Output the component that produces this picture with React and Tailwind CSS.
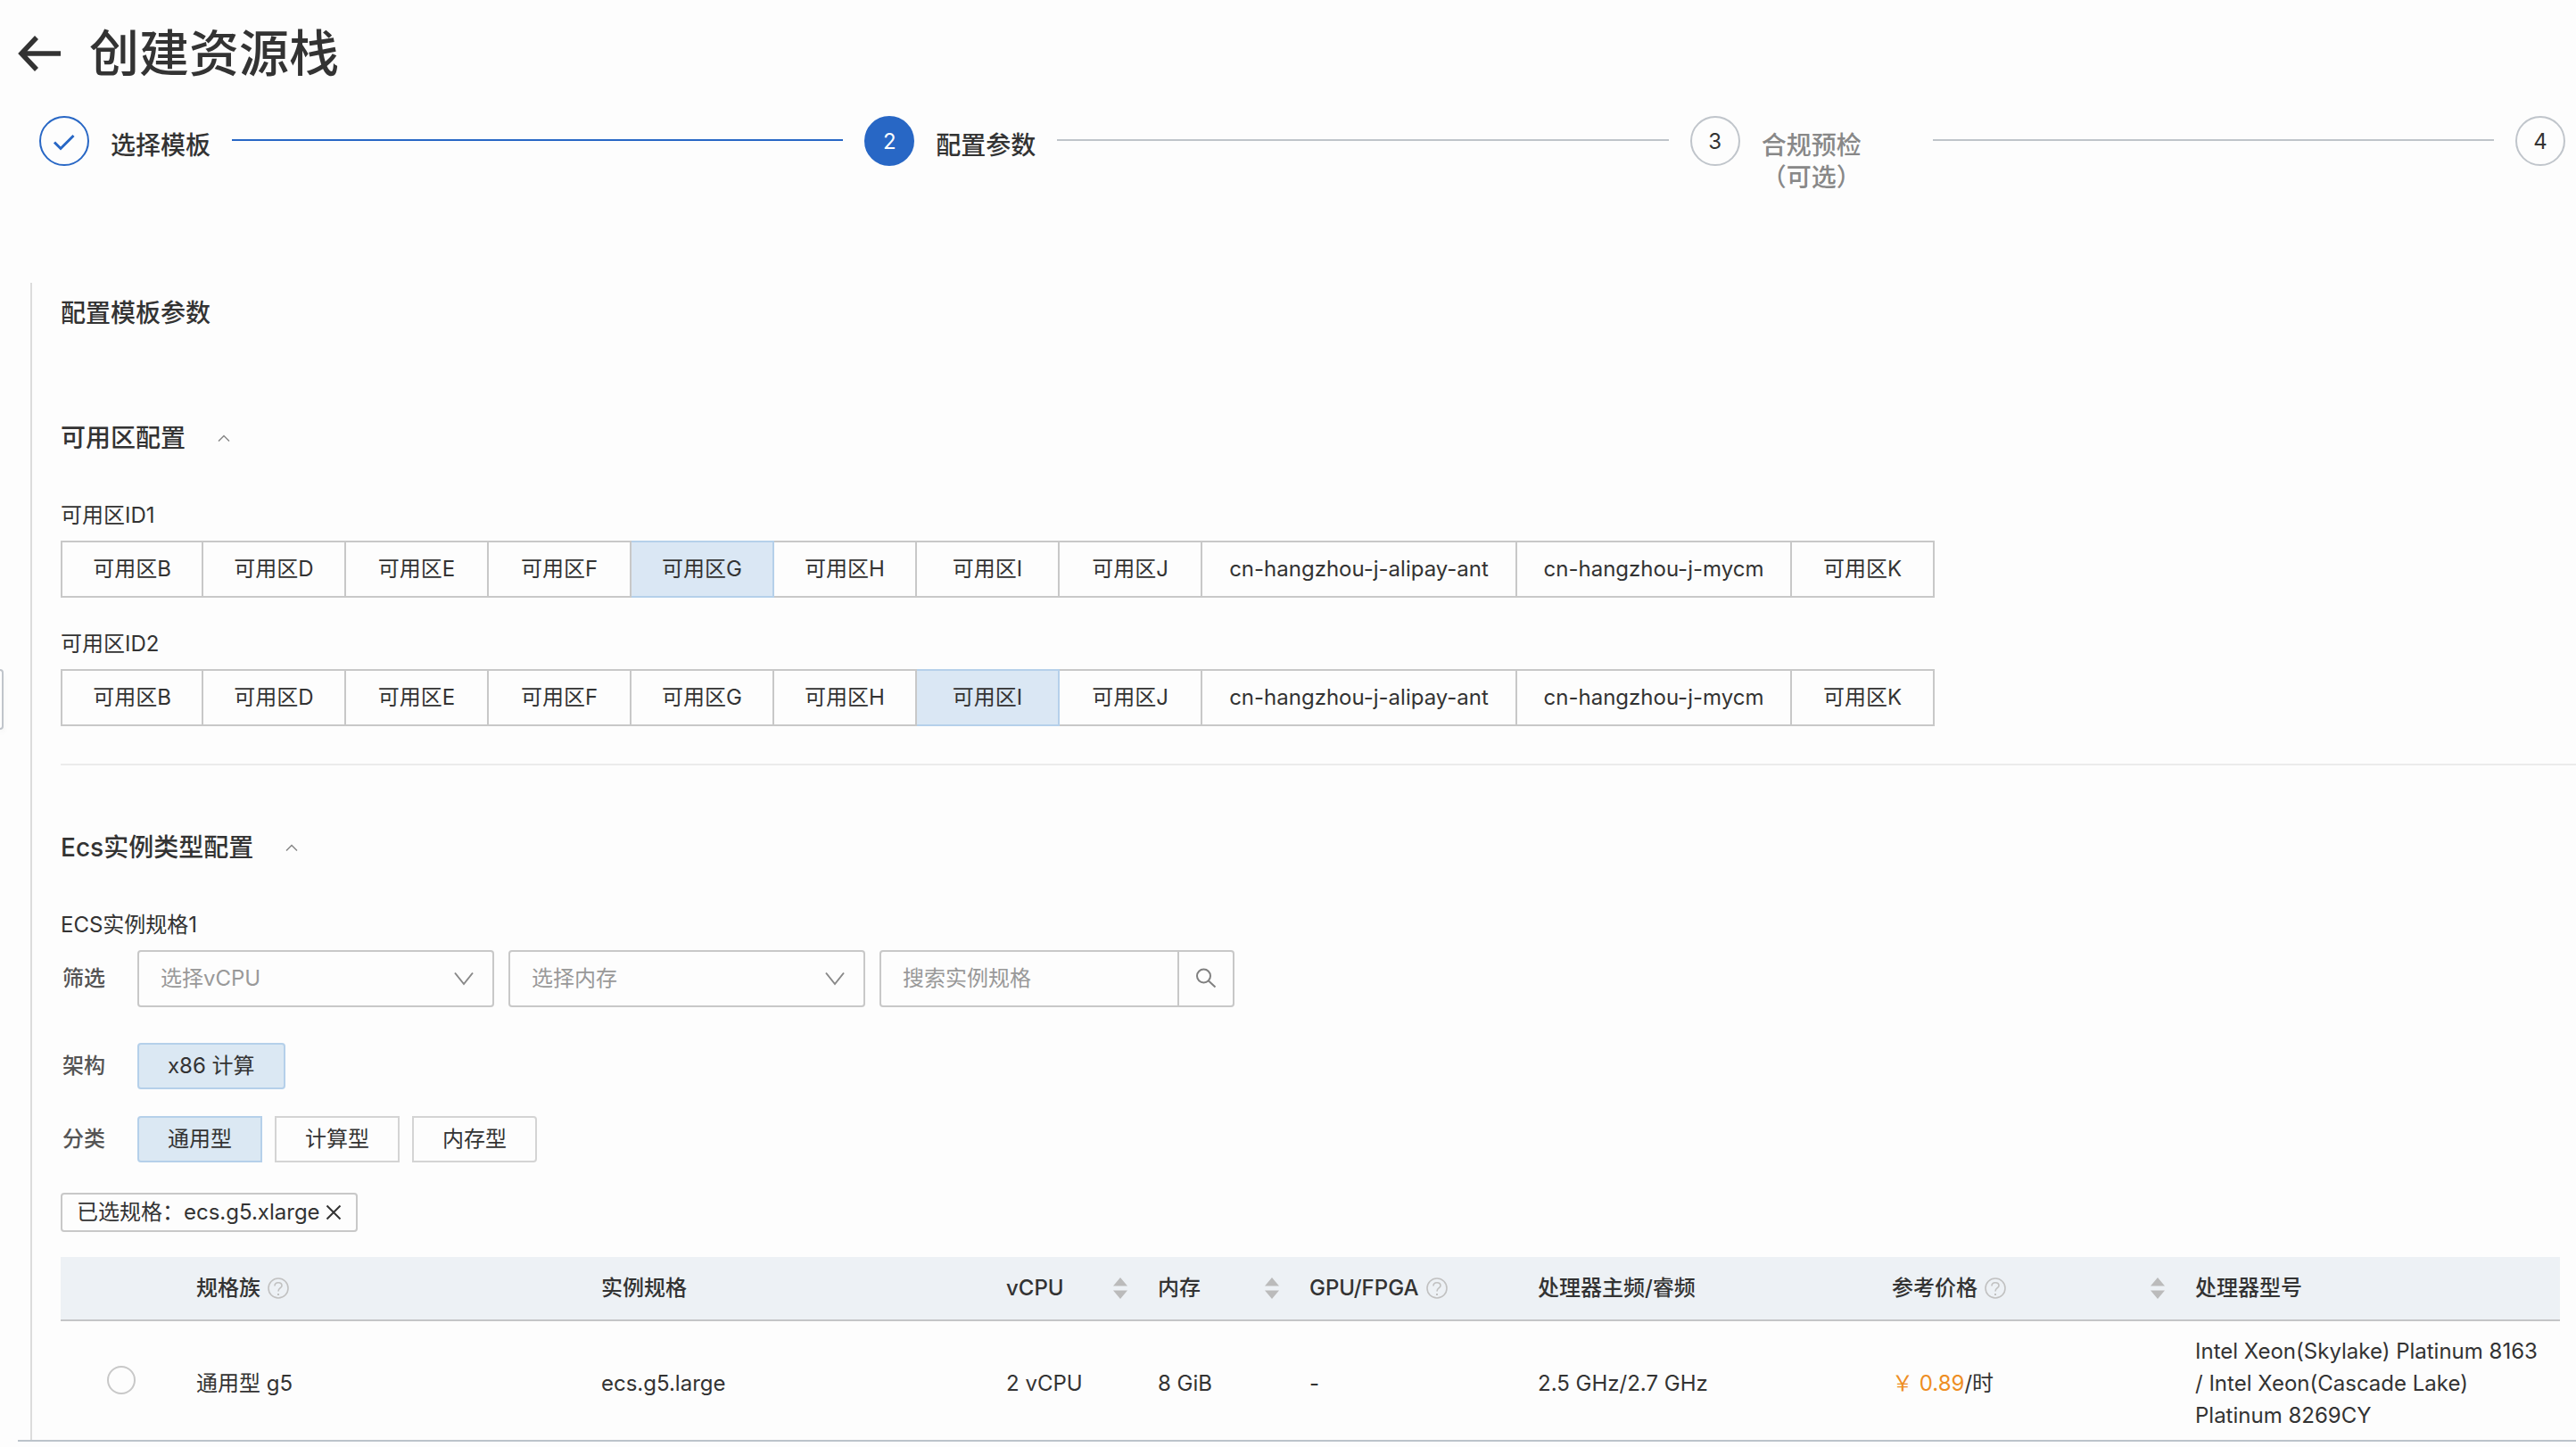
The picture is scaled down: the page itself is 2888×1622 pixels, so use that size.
import React, { useState } from 'react';

const zones = [
  { name: '可用区B' },
  { name: '可用区D' },
  { name: '可用区E' },
  { name: '可用区F' },
  { name: '可用区G' },
  { name: '可用区H' },
  { name: '可用区I' },
  { name: '可用区J' },
  { name: 'cn-hangzhou-j-alipay-ant', width: 'w-[353px]' },
  { name: 'cn-hangzhou-j-mycm', width: 'w-[308px]' },
  { name: '可用区K' },
];

const columns = [
  { title: '', width: 'w-[120px]' },
  { title: '规格族', width: 'w-[454px]', help: true },
  { title: '实例规格', width: 'w-[454px]' },
  { title: 'vCPU', width: 'w-[170px]', sort: true },
  { title: '内存', width: 'w-[170px]', sort: true },
  { title: 'GPU/FPGA', width: 'w-[256px]', help: true },
  { title: '处理器主频/睿频', width: 'w-[397px]' },
  { title: '参考价格', width: 'w-[340px]', help: true, sort: true },
  { title: '处理器型号', width: 'w-[441px]' },
];

const specs = [
  {
    family: '通用型 g5',
    type: 'ecs.g5.large',
    cpu: '2 vCPU',
    memory: '8 GiB',
    gpu: '-',
    clock: '2.5 GHz/2.7 GHz',
    price: '0.89',
    model: 'Intel Xeon(Skylake) Platinum 8163 / Intel Xeon(Cascade Lake) Platinum 8269CY',
  },
];

const ChevronUp = () => (
  <svg width="14" height="8" viewBox="0 0 14 8" fill="none" stroke="#888" strokeWidth="1.5">
    <path d="M1 7.5 7 1.5l6 6" />
  </svg>
);

const HelpIcon = () => (
  <svg width="24" height="24" viewBox="0 0 24 24" fill="none" stroke="#c1c1c1" strokeWidth="1.6">
    <circle cx="12" cy="12" r="11" />
    <path d="M8 9.500C8 7.200 9.700 5.800 12 5.800s4 1.400 4 3.400c0 2.600-4 2.600-4 6.300" />
    <path d="M12 18v2" strokeWidth="2" />
  </svg>
);

const SortIcon = () => (
  <svg width="16" height="26" viewBox="0 0 16 26" fill="#bbb">
    <path d="M8 1 16 10.500H0zM0 15.500h16L8 25z" />
  </svg>
);

const Section = ({ title, children }) => {
  const [isOpen, setIsOpen] = useState(true);

  return (
    <section>
      <h3>
        <button
          type="button"
          aria-expanded={isOpen}
          onClick={() => setIsOpen(!isOpen)}
          className="flex items-center text-[28px] leading-10 font-medium"
        >
          {title}
          <span className={isOpen ? 'ml-9' : 'ml-9 rotate-180'}>
            <ChevronUp />
          </span>
        </button>
      </h3>
      {isOpen && children}
    </section>
  );
};

const ZonePicker = ({ label, initial }) => {
  const [value, setValue] = useState(initial);

  return (
    <div role="group" aria-label={label} className="mb-8">
      <div className="mb-2 leading-10">{label}</div>
      <div className="flex">
        {zones.map((zone) => (
          <button
            key={zone.name}
            type="button"
            aria-pressed={value === zone.name}
            onClick={() => setValue(zone.name)}
            className={`h-16 border-2 border-l-0 first:border-l-2 ${zone.width || 'w-40'} ${
              value === zone.name ? 'border-[#b5d0ea] bg-[#dae7f4]' : 'border-[#c8c8c8]'
            }`}
          >
            {zone.name}
          </button>
        ))}
      </div>
    </div>
  );
};

const FilterSelect = ({ label }) => (
  <div className="relative w-[400px]">
    <select
      aria-label={label}
      className="h-16 w-full appearance-none rounded-sm border-2 border-[#c8c8c8] bg-transparent px-6 text-[#999]"
    >
      <option>{label}</option>
    </select>
    <svg
      className="pointer-events-none absolute top-6 right-[22px]"
      width="24"
      height="16"
      viewBox="0 0 24 16"
      fill="none"
      stroke="#888"
      strokeWidth="2"
    >
      <path d="M2 1.500 12 14 22 1.500" />
    </svg>
  </div>
);

const FilterRow = ({ label, children }) => (
  <div className="flex items-center">
    <div className="w-[86px] pl-0.5 font-medium text-[#555]">{label}</div>
    {children}
  </div>
);

const Option = ({ active, className = '', children }) => (
  <button
    type="button"
    aria-pressed={active}
    className={`h-[52px] border-2 px-8 ${className} ${
      active ? 'border-[#b5d0ea] bg-[#dbe8f3]' : 'border-[#d4d4d4]'
    }`}
  >
    {children}
  </button>
);

const Circle = ({ className, children }) => (
  <span className={`flex size-14 shrink-0 items-center justify-center rounded-full border-2 pt-0.5 ${className}`}>
    {children}
  </span>
);

const Steps = () => (
  <ol className="flex items-start pt-2.5 pr-3 pl-11 font-medium">
    <li className="flex flex-1 items-start">
      <Circle className="border-[#2867c5]">
        <svg width="26" height="20" viewBox="0 0 26 20" fill="none" stroke="#2867c5" strokeWidth="3">
          <path d="m2 10.500 7 7L23.500 3" />
        </svg>
      </Circle>
      <span className="ml-6 pt-[15px] text-[28px] leading-9">选择模板</span>
      <span className="mt-[26px] mr-6 ml-6 h-0.5 flex-1 bg-[#2867c5]" />
    </li>
    <li className="flex flex-1 items-start" aria-current="step">
      <Circle className="border-[#2867c5] bg-[#2867c5] font-normal text-white">2</Circle>
      <span className="ml-6 pt-[15px] text-[28px] leading-9">配置参数</span>
      <span className="mt-[26px] mr-6 ml-6 h-0.5 flex-1 bg-[#bfc4ca]" />
    </li>
    <li className="flex flex-1 items-start">
      <Circle className="border-[#c0c5cb] font-normal">3</Circle>
      <span className="ml-6 w-[168px] pt-[15px] text-[28px] leading-9 text-[#888]">
        合规预检
        <br />
        （可选）
      </span>
      <span className="mt-[26px] mr-6 ml-6 h-0.5 flex-1 bg-[#bfc4ca]" />
    </li>
    <li>
      <Circle className="border-[#c0c5cb] font-normal">4</Circle>
    </li>
  </ol>
);

const SpecTable = () => (
  <table className="w-full table-fixed text-left leading-9">
    <thead>
      <tr className="h-[71px] border-b-2 border-[#c4c5c7] bg-[#edf1f5]">
        {columns.map((col) => (
          <th key={col.title} className={`${col.width} pl-8 font-medium`}>
            <div className="flex items-center gap-2 pr-0.5">
              {col.title}
              {col.help && <HelpIcon />}
              {col.sort && (
                <button type="button" aria-label={`${col.title} 排序`} className="ml-auto">
                  <SortIcon />
                </button>
              )}
            </div>
          </th>
        ))}
      </tr>
    </thead>
    <tbody>
      {specs.map((spec) => (
        <tr key={spec.type}>
          <td className="pb-2 pl-[52px]">
            <input
              type="radio"
              name="spec"
              aria-label={spec.type}
              className="block size-8 appearance-none rounded-full border-2 border-[#c8c8c8] checked:border-8 checked:border-[#2867c5]"
            />
          </td>
          <td className="pl-8">{spec.family}</td>
          <td className="pl-8">{spec.type}</td>
          <td className="pl-8">{spec.cpu}</td>
          <td className="pl-8">{spec.memory}</td>
          <td className="pl-8">{spec.gpu}</td>
          <td className="pl-8">{spec.clock}</td>
          <td className="pl-8">
            <span className="text-[#ee8e24]">￥ {spec.price}</span>/时
          </td>
          <td className="py-4 pr-3 pl-8">{spec.model}</td>
        </tr>
      ))}
    </tbody>
  </table>
);

const App = () => {
  return (
    <div className="relative flex h-screen flex-col overflow-hidden bg-[#fdfdfd] font-['Inter','Noto_Sans_CJK_SC',sans-serif] text-2xl text-[#333]">
      <header className="flex h-[120px] items-center gap-[30px] pl-5">
        <a href="#" aria-label="返回">
          <svg width="50" height="42" viewBox="0 0 50 42" fill="none" stroke="#333" strokeWidth="5.500">
            <path d="M48 21H4M21 3 4 21l17 18" />
          </svg>
        </a>
        <h1 className="text-[56px] leading-[72px] font-medium">创建资源栈</h1>
      </header>

      <Steps />

      {/* Template parameters */}
      <main className="mt-[100px] ml-[34px] min-h-0 flex-1 overflow-hidden border-l-2 border-[#dcdcdc] pl-8">
        <h2 className="mt-3.5 mb-[100px] text-[28px] leading-10 font-medium">配置模板参数</h2>

        <Section title="可用区配置">
          <div className="mt-[47px] border-b-2 border-[#ebebeb] pb-2.5">
            <ZonePicker label="可用区ID1" initial="可用区G" />
            <ZonePicker label="可用区ID2" initial="可用区I" />
          </div>
        </Section>

        <div className="mt-[72px] pr-[18px]">
          <Section title="Ecs实例类型配置">
            <div className="mt-[47px] mb-2 leading-10">ECS实例规格1</div>
            <FilterRow label="筛选">
              <div className="flex gap-4">
                <FilterSelect label="选择vCPU" />
                <FilterSelect label="选择内存" />
                <div className="flex h-16 w-[398px] rounded-sm border-2 border-[#c8c8c8]">
                  <input
                    type="text"
                    aria-label="搜索实例规格"
                    placeholder="搜索实例规格"
                    className="min-w-0 flex-1 pl-6 placeholder:text-[#999]"
                  />
                  <button
                    type="button"
                    aria-label="搜索"
                    className="flex w-[62px] items-center justify-center border-l-2 border-[#c8c8c8]"
                  >
                    <svg width="24" height="24" viewBox="0 0 24 24" fill="none" stroke="#808080" strokeWidth="2">
                      <circle cx="9.500" cy="9" r="7.500" />
                      <path d="m15 14.500 7.500 7" />
                    </svg>
                  </button>
                </div>
              </div>
            </FilterRow>
            <div className="mt-10">
              <FilterRow label="架构">
                <Option active className="rounded-sm">
                  x86 计算
                </Option>
              </FilterRow>
            </div>
            <div className="mt-[30px]">
              <FilterRow label="分类">
                <div className="flex gap-3.5">
                  <Option active className="rounded-l-sm">
                    通用型
                  </Option>
                  <Option>计算型</Option>
                  <Option className="rounded-r-sm">内存型</Option>
                </div>
              </FilterRow>
            </div>

            {/* Current selection */}
            <div className="mt-[34px] mb-7 flex h-11 w-fit items-center rounded-sm border-2 border-[#c8c8c8] px-4">
              已选规格：ecs.g5.xlarge
              <button type="button" aria-label="移除" className="ml-1.5">
                <svg width="18" height="18" viewBox="0 0 18 18" fill="none" stroke="#333" strokeWidth="2">
                  <path d="m1.500 1.500 15 15M16.500 1.500l-15 15" />
                </svg>
              </button>
            </div>

            <SpecTable />
          </Section>
        </div>
      </main>

      <footer className="ml-5 h-2 shrink-0 border-t-2 border-[#bcc3cb]" />

      {/* Handle of the collapsed side menu */}
      <button
        type="button"
        aria-label="展开菜单"
        className="absolute top-[750px] left-0 h-[68px] w-1 rounded-r-sm border-2 border-l-0 border-[#c0c5cb] bg-white shadow-md"
      />
    </div>
  );
};

export default App;
